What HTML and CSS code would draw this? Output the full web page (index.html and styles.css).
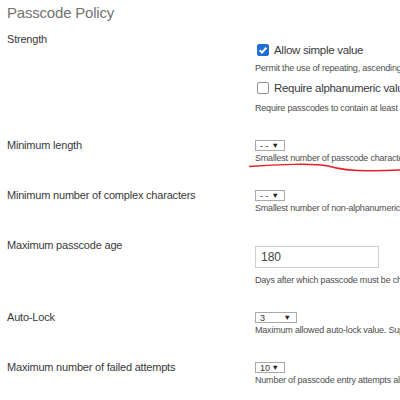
FILE: index.html
```html
<!DOCTYPE html>
<html lang="en">
<head>
  <meta charset="UTF-8">
  <title>Passcode Policy</title>
  <link rel="stylesheet" href="styles.css">
</head>

<body>

  <div class="page">
    <h2 class="title">Passcode Policy</h2>

    <div class="field">
      <div class="field-label">Strength</div>
      <div class="field-control strength">
        <div class="check">
          <span class="box checked">
            <svg width="12" height="12" viewBox="0 0 12 12"><path d="M2.6 6.2 L5 8.5 L9.4 3.6" fill="none" stroke="#fff" stroke-width="2"/></svg>
          </span>
          <span>Allow simple value</span>
        </div>
        <div class="hint">Permit the use of repeating, ascending, and descending character sequences</div>
        <div class="check second">
          <span class="box"></span>
          <span>Require alphanumeric value</span>
        </div>
        <div class="hint hint-last">Require passcodes to contain at least one letter</div>
      </div>
    </div>

    <div class="field">
      <div class="field-label">Minimum length</div>
      <div class="field-control">
        <div class="select"><span>- -</span><span class="arrow">&#9660;</span></div>
        <div class="hint">Smallest number of passcode characters allowed</div>
      </div>
    </div>

    <div class="field">
      <div class="field-label">Minimum number of complex characters</div>
      <div class="field-control">
        <div class="select"><span>- -</span><span class="arrow">&#9660;</span></div>
        <div class="hint">Smallest number of non-alphanumeric characters allowed</div>
      </div>
    </div>

    <div class="field">
      <div class="field-label">Maximum passcode age</div>
      <div class="field-control">
        <div class="text-input">180</div>
        <div class="hint hint-input">Days after which passcode must be changed</div>
      </div>
    </div>

    <div class="field">
      <div class="field-label">Auto-Lock</div>
      <div class="field-control">
        <div class="select select-wide"><span>3</span><span class="arrow">&#9660;</span></div>
        <div class="hint">Maximum allowed auto-lock value. Supervised devices only</div>
      </div>
    </div>

    <div class="field">
      <div class="field-label">Maximum number of failed attempts</div>
      <div class="field-control">
        <div class="select"><span>10</span><span class="arrow">&#9660;</span></div>
        <div class="hint">Number of passcode entry attempts allowed before all data on device will be erased</div>
      </div>
    </div>
  </div>

  <!-- red pen mark from the screenshot -->
  <svg class="pen-mark" width="400" height="400" viewBox="0 0 400 400">
    <path d="M249 166.5 C275 164.5 315 163 328 166 C338 169 350 171 372 170.8 C385 170.6 395 170.2 400 170" fill="none" stroke="#ec1c24" stroke-width="1.4"/>
  </svg>

</body>
</html>
```

FILE: styles.css
```css
html, body {
  overflow: hidden;
}

body {
  margin: 0;
  font-family: 'Liberation Sans', Arial, sans-serif;
  background-color: #fff;
  color: #39393b;
  position: relative;
}

.page {
  padding-left: 7px;
  width: 600px;
}

.title {
  margin: 3px 0 9px;
  font-size: 15px;
  line-height: 20px;
  letter-spacing: -0.2px;
  font-weight: normal;
  color: #737373;
}

.field {
  display: grid;
  grid-template-columns: 248px 1fr;
  margin-bottom: 24px;
}

.field-label {
  font-size: 11px;
  line-height: 14px;
  letter-spacing: -0.2px;
  color: #39393b;
}

.field-control {
  padding-top: 2px;
}

.strength {
  padding-top: 11px;
}

.check {
  display: flex;
  align-items: center;
  gap: 5px;
  height: 13px;
  font-size: 11.5px;
  letter-spacing: -0.3px;
  color: #39393b;
  padding-left: 2px;
}

.check.second {
  margin-top: 7px;
}

.box {
  width: 12px;
  height: 12px;
  box-sizing: border-box;
  border: 1px solid #8f8f8f;
  border-radius: 2px;
  background: #fff;
  display: flex;
}

.box.checked {
  background: #1f6fd6;
  border-color: #1f6fd6;
}

.box.checked svg {
  margin: -1px;
}

.hint {
  font-size: 9px;
  line-height: 12px;
  letter-spacing: -0.2px;
  color: #4d4d4d;
  white-space: nowrap;
}

.strength .hint {
  margin-top: 6px;
}

.strength .hint-last {
  margin-top: 8px;
}

.select {
  display: flex;
  justify-content: space-between;
  align-items: center;
  box-sizing: border-box;
  width: 30px;
  height: 11px;
  padding: 0 5px 0 4px;
  border: 1px solid #a9a9a9;
  font-size: 9px;
  color: #333;
  margin-bottom: 1px;
}

.select-wide {
  width: 42px;
}

.arrow {
  font-size: 7.5px;
  color: #222;
}

.text-input {
  box-sizing: border-box;
  width: 124px;
  height: 22px;
  margin-top: 6px;
  border: 1px solid #cfcfcf;
  padding: 4px 5px;
  font-size: 12px;
  line-height: 13px;
  color: #444;
}

.hint-input {
  margin-top: 6px;
}

.pen-mark {
  position: absolute;
  left: 0;
  top: 0;
  pointer-events: none;
}
```
